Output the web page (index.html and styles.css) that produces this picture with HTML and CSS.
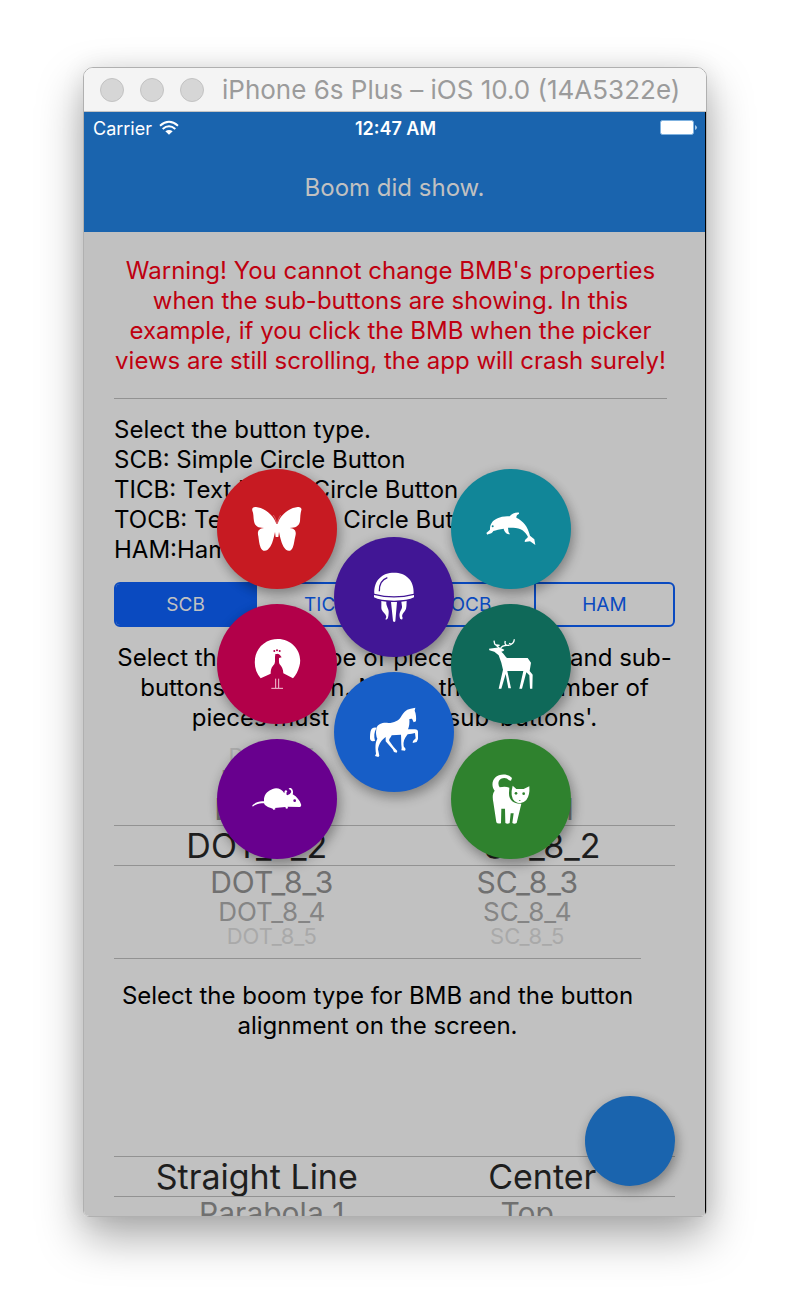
FILE: index.html
```html
<!DOCTYPE html>
<html lang="en">
<head>
<meta charset="utf-8">
<meta name="viewport" content="width=device-width, initial-scale=1">
<title>Boom Menu Button</title>
<link rel="stylesheet" href="styles.css">
</head>
<body>
<div class="window">
  <div class="titlebar">
    <div class="lights"><span class="light"></span><span class="light"></span><span class="light"></span></div>
    <span class="window-title">iPhone 6s Plus – iOS 10.0 (14A5322e)</span>
  </div>
  <div class="screen">
    <header class="header">
      <div class="status">
        <span class="carrier">Carrier
          <svg class="wifi" viewBox="265 192 60 48" aria-label="Wi-Fi">
            <path d="M268 209 Q295 186 322 209" fill="none" stroke="#fff" stroke-width="6"/>
            <path d="M276 219 Q295 203 314 219" fill="none" stroke="#fff" stroke-width="6"/>
            <path d="M284 226 Q295 218 306 226 L295 236Z" fill="#fff"/>
          </svg>
        </span>
        <span class="time">12:47 AM</span>
        <svg class="battery" viewBox="0 0 38 16" aria-label="Battery full">
          <rect x="0.5" y="0.5" width="33" height="14" rx="2" fill="#fff" stroke="#7fb2e0"/>
          <path d="M35 5 Q37 6 37 7.500 Q37 9 35 10Z" fill="#a9cbea"/>
        </svg>
      </div>
      <h1 class="headline">Boom did show.</h1>
    </header>
    <main class="content">
      <p class="warning">Warning! You cannot change BMB's properties<br>when the sub-buttons are showing. In this<br>example, if you click the BMB when the picker<br>views are still scrolling, the app will crash surely!</p>
      <hr class="rule">
      <p class="types">Select the button type.<br>SCB: Simple Circle Button<br>TICB: Text Inside Circle Button<br>TOCB: Text Outside Circle Button<br>HAM:Ham Button</p>
      <div class="segments">
        <button type="button" class="segment selected">SCB</button>
        <button type="button" class="segment">TICB</button>
        <button type="button" class="segment">TOCB</button>
        <button type="button" class="segment">HAM</button>
      </div>
      <p class="note">Select the place type of pieces on BMB and sub-<br>buttons on screen. Notice that the number of<br>pieces must equal the sub-buttons'.</p>
      <div class="picker">
        <ul class="column left">
          <li class="far">DOT_7_5</li><li class="mid">DOT_7_6</li><li class="near">DOT_8_1</li>
          <li class="current">DOT_8_2</li>
          <li class="near">DOT_8_3</li><li class="mid">DOT_8_4</li><li class="far">DOT_8_5</li>
        </ul>
        <ul class="column right">
          <li class="far"></li><li class="mid"></li><li class="near">SC_8_1</li>
          <li class="current">SC_8_2</li>
          <li class="near">SC_8_3</li><li class="mid">SC_8_4</li><li class="far">SC_8_5</li>
        </ul>
      </div>
      <hr class="rule short">
      <p class="boom">Select the boom type for BMB and the button<br>alignment on the screen.</p>
      <div class="picker cut">
        <ul class="column left">
          <li class="far"></li><li class="mid"></li><li class="near"></li>
          <li class="current">Straight Line</li>
          <li class="near">Parabola 1</li>
        </ul>
        <ul class="column right">
          <li class="far"></li><li class="mid"></li><li class="near"></li>
          <li class="current">Center</li>
          <li class="near">Top</li>
        </ul>
      </div>
    </main>

    <div class="boom-menu">
      <div class="stack">
        <button type="button" class="bubble red" aria-label="Butterfly">
          <svg class="icon" viewBox="119 123 168 168"><path d="M201 191C193 168 170 144 140 141C131 140 127 145 129 152C133 160 132 172 134 184C137 199 147 204 164 204C148 206 143 213 147 229C149 241 149 252 154 263C158 273 167 275 175 269C187 260 192 240 197 216L199 231H207L209 216C214 240 219 260 230 269C238 275 246 273 250 263C255 251 255 240 258 229C262 213 257 206 241 204C258 204 269 199 272 184C273 171 273 160 276 151C278 144 273 140 265 141C235 144 212 168 205 191Z"/><path class="thin" d="M202 190Q199 174 192 165M204 190Q207 174 214 165"/></svg>
        </button>
        <button type="button" class="bubble crimson" aria-label="Peacock">
          <svg class="icon" viewBox="119 108 168 168"><path d="M154 235C124 202 131 137 184 120C239 104 284 152 270 199C266 214 260 225 251 235L222 220C222 208 217 200 211 193C208 188 209 180 209 174L217 172Q212 162 204 161Q197 162 197 170V185Q197 191 191 197C185 204 184 211 184 221Z"/><g class="crimson-fill"><circle cx="195" cy="153" r="3"/><circle cx="203" cy="151" r="3"/><circle cx="211" cy="153" r="3"/><path d="M198 162H208L207 172H199Z"/></g><path class="stroke" d="M199 236V264M208 236V264M186 265H221"/></svg>
        </button>
        <button type="button" class="bubble purple" aria-label="Mouse">
          <svg class="icon" viewBox="119 108 168 168"><path d="M164 199C151 197 138 202 129 211L130 215C140 207 151 203 164 205C166 212 176 217 190 221L193 225L199 222L196 219L228 216L230 221L236 220L235 215L272 216Q277 214 275 208C272 198 263 185 250 178Q254 165 245 159Q238 158 238 162Q246 164 246 171Q242 179 234 181Q228 176 231 168Q225 166 225 175C217 161 202 157 190 162C177 167 166 176 164 191Z"/><path d="M226 168Q230 163 234 169Q231 171 231 177Q226 176 226 168Z"/><circle class="purple-fill" cx="256" cy="197" r="4"/></svg>
        </button>
      </div>
      <div class="stack">
        <button type="button" class="bubble indigo" aria-label="Jellyfish">
          <svg class="icon" viewBox="110 114 168 168"><path d="M135 188C133 147 159 125 194 125C229 125 255 147 253 188Q194 203 135 188ZM134 192Q194 207 254 192V199Q236 209 194 209Q152 209 134 199ZM156 210L171 212C169 225 180 233 178 246C177 256 177 266 169 266Q168 263 171 258C170 246 156 242 156 230ZM185 213H203L198 271Q194 275 191 270ZM216 212L232 210C231 222 233 234 225 242C217 250 218 256 220 260L219 265Q211 267 211 258C208 241 219 237 218 226Z"/><path class="indigo-line" d="M150 181Q149 149 174 140"/></svg>
        </button>
        <button type="button" class="bubble blue" aria-label="Horse">
          <svg class="icon" viewBox="110 106 168 168"><path d="M141 178C147 165 160 161 177 163C194 162 208 156 215 144C221 134 229 122 244 120L258 117L256 126C260 135 261 146 260 158L253 161L248 150L240 151C241 162 240 173 236 182H254C262 181 266 184 266 190V211L262 220L250 223L251 217L259 209L257 193L247 195L235 197C225 210 221 219 223 233L229 241L227 246L216 245L217 238C215 224 216 210 215 198L187 200C184 208 178 211 180 217L193 235L204 247L202 252L194 250L190 242L169 218V205C156 215 149 225 146 242L150 261L147 265L137 262L140 255C138 237 137 223 144 210Q138 199 141 182Z"/><path d="M140 177C124 175 123 188 122 205C121 212 124 217 129 218L137 217C133 203 135 190 140 181Z"/></svg>
        </button>
      </div>
      <div class="stack">
        <button type="button" class="bubble teal" aria-label="Dolphin">
          <svg class="icon" viewBox="116 108 168 168"><path d="M126 204L137 194C136 176 147 163 164 158C176 154 187 154 196 154C202 146 213 142 224 143L224 147Q216 149 216 158C237 168 250 184 257 212L270 223L273 240L257 229L241 231L242 225L251 216C243 199 230 188 206 188L191 188Q191 202 197 208C188 208 181 203 178 191C166 193 155 195 147 198C142 207 136 206 129 209Z"/><circle class="teal-fill" cx="145" cy="184" r="3"/></svg>
        </button>
        <button type="button" class="bubble green-dark" aria-label="Deer">
          <svg class="icon" viewBox="116 108 168 168"><path d="M134 146L156 143L164 142L180 149Q179 154 171 155C178 160 183 170 188 174H250L260 188L256 213L265 224L264 266H257L255 226L246 217L233 266H225L237 213H189L200 265H192L184 222L171 266H163L176 209L171 188L163 166L150 155L135 151Z"/><path class="antler" d="M164 143L151 132L149 122M156 135L166 136M169 145Q173 135 191 136Q209 134 210 118M186 136Q180 132 183 123M202 133L194 130"/></svg>
        </button>
        <button type="button" class="bubble green" aria-label="Cat">
          <svg class="icon" viewBox="116 108 168 168"><path d="M200 137L203 129C193 116 166 114 152 128C142 138 142 156 151 167C143 177 145 192 147 202L156 262Q158 267 170 265L171 221H182L183 264Q189 268 196 264L199 235H208L204 264Q210 268 217 264L231 206C212 208 193 198 194 174L195 158Q183 153 166 157C160 149 161 136 170 131Q185 125 194 136Z"/><path d="M205 152L216 162H238L255 154Q257 182 246 195Q230 212 211 199Q196 184 205 152Z"/><g class="green-fill"><circle cx="215" cy="175" r="4"/><circle cx="238" cy="176" r="4"/><path d="M223 195H230L226 198Z"/></g></svg>
        </button>
      </div>
    </div>
    <button type="button" class="fab" aria-label="Boom"></button>
  </div>
</div>
</body>
</html>
```
FILE: styles.css
```css
*, *::before { box-sizing: border-box; }
body {
  margin: 0;
  padding: 67px 83px 99px;
  background: #fff;
  font-family: Inter, "Liberation Sans", sans-serif;
  color: #000;
}
p, h1, ul, hr { margin: 0; padding: 0; }
button { font: inherit; border: 0; padding: 0; }
.window {
  border: 1px solid #b0b0b0;
  border-radius: 10px 10px 6px 6px;
  overflow: hidden;
  box-shadow: 0 20px 45px rgba(0, 0, 0, .34), 0 0 24px rgba(0, 0, 0, .08);
}
.titlebar {
  display: flex;
  align-items: center;
  gap: 18px;
  height: 44px;
  padding: 0 16px;
  background: #f4f4f4;
  border-bottom: 1px solid #c4c4c4;
}
.lights { display: flex; gap: 16px; }
.light {
  width: 24px;
  height: 24px;
  border: 1px solid #c3c3c3;
  border-radius: 50%;
  background: #d6d6d6;
}
.window-title { font-size: 26px; color: #9b9b9b; white-space: nowrap; }
.screen {
  position: relative;
  overflow: hidden;
  background: #c1c1c1;
  border-right: 1px solid #000;
}
.header { height: 120px; background: #1a64ae; }
.status {
  display: grid;
  grid-template-columns: 1fr auto 1fr;
  align-items: center;
  height: 32px;
  padding: 0 7px 0 9px;
  color: #fff;
  font-size: 18px;
}
.carrier { display: flex; align-items: center; gap: 7px; }
.wifi { width: 20px; height: 16px; }
.time { font-weight: 600; }
.battery { width: 38px; height: 16px; justify-self: end; }
.headline {
  font-size: 24px;
  line-height: 30px;
  font-weight: 400;
  text-align: center;
  color: #c1c1c1;
  padding-top: 29px;
}
.content { padding: 24px 30px 0; font-size: 24px; line-height: 30px; white-space: nowrap; }
.warning { color: #bf0010; text-align: center; margin-right: 8px; display: flow-root; }
.rule { border: 0; height: 1px; background: #929292; margin: 22px 8px 16px 0; }
.rule.short { margin: 9px 34px 22px 0; }
.segments {
  display: grid;
  grid-template-columns: repeat(4, minmax(0, 1fr));
  height: 45px;
  margin: 17px 0 16px;
  border: 2px solid #0a4ac0;
  border-radius: 6px;
  overflow: hidden;
}
.segment { background: transparent; color: #0a4ac0; font-size: 19px; }
.segment + .segment { border-left: 2px solid #0a4ac0; }
.segment.selected { background: #0a4ac0; color: #c1c1c1; }
.note { text-align: center; }
.picker {
  position: relative;
  display: grid;
  grid-template-columns: 1fr 1fr;
  gap: 4px;
  height: 216px;
  padding: 12px 0 0 2px;
  margin-right: -8px;
  overflow: hidden;
}
.picker::before {
  content: "";
  position: absolute;
  left: 0;
  right: 8px;
  top: 92px;
  height: 41px;
  border: solid #929292;
  border-width: 1px 0;
}
.column { list-style: none; text-align: center; }
.left li:not(.current) { padding-left: 30px; }
.right li:not(.current) { padding-right: 30px; }
.column li { display: flex; justify-content: center; align-items: center; line-height: 1; }
.far { height: 21px; font-size: 22px; color: #a9a9a9; }
.mid { height: 27px; font-size: 26px; color: #858585; }
.near { height: 32px; font-size: 30px; color: #707070; }
.current { height: 41px; font-size: 34px; color: #1e1e1e; }
.boom { text-align: center; margin-right: 34px; }
.picker.cut { height: 152px; margin-top: 23px; }
.boom-menu {
  position: absolute;
  top: 357px;
  left: 0;
  right: 1px;
  display: flex;
  justify-content: center;
  align-items: center;
}
.stack { display: grid; gap: 15px; }
.stack + .stack { margin-left: -3px; }
.bubble, .fab { border-radius: 50%; box-shadow: 3px 6px 12px rgba(0, 0, 0, .24), 0 2px 12px rgba(0, 0, 0, .14); }
.bubble { display: grid; place-items: center; width: 120px; height: 120px; }
.icon { width: 56px; height: 56px; fill: #fff; }
.thin { fill: none; stroke: #e08088; stroke-width: 2; }
.stroke { fill: none; stroke: #f3c4d4; stroke-width: 3; }
.antler { fill: none; stroke: #fff; stroke-width: 4; }
.red { background: #c71a22; }
.crimson { background: #b20049; }
.purple { background: #68008e; }
.indigo { background: #411695; }
.blue { background: #175ec7; }
.teal { background: #118698; }
.green-dark { background: #0f6959; }
.green { background: #2f822e; }
.crimson-fill { fill: #b20049; }
.purple-fill { fill: #68008e; }
.teal-fill { fill: #118698; }
.green-fill { fill: #2f822e; }
.indigo-line { fill: none; stroke: #411695; stroke-width: 4; }
.fab {
  position: absolute;
  right: 30px;
  bottom: 30px;
  width: 90px;
  height: 90px;
  background: #1a64ae;
}
```
